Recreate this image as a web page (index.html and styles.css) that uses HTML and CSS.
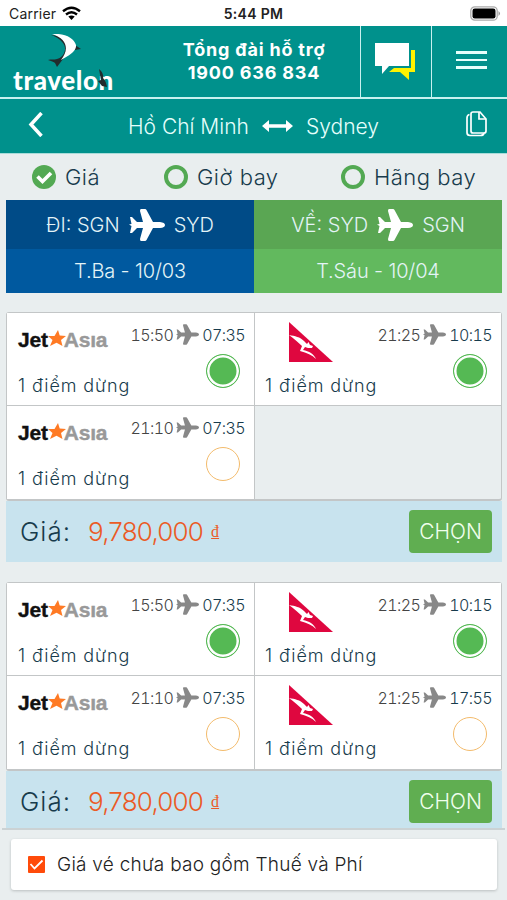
FILE: index.html
```html
<!DOCTYPE html>
<html lang="vi">
<head>
    <meta charset="UTF-8">
    <meta name="viewport" content="width=device-width, initial-scale=1.0">
    <title>Travelon</title>
    <link rel="stylesheet" href="styles.css">
</head>
<body>
    <!-- Shared icons -->
    <svg class="sprite" width="0" height="0">
        <symbol id="plane" viewBox="0 0 36 32">
            <path d="M1 8h2l5 5h6L11 2q0-2 1-2h4q1 0 1.500 1L24 13h7q5 .5 5 3t-5 3h-7l-6.500 12q-.5 1-1.500 1h-4q-1 0-1-2l3-11H8l-5 5H1l1.500-7L0 15.500 2.500 15z"/>
        </symbol>
        <symbol id="star" viewBox="0 0 18 16">
            <path d="M10 0l1.700 5.500L18 6l-5 4 1.500 6L8.500 12.800 2 16l2.500-6L0 6h6.500z"/>
        </symbol>
        <symbol id="qantas" viewBox="0 0 44 40">
            <path fill="#df073f" d="M0 0l44 40H0z"/>
            <path fill="#fff" d="M0 13c6 1 11 2 15 6l3 3 1.500-2 1.500 3 3 1-1 2h-4l-3-1-2 3c6 1 11 4 13 9-4-4-9-6-16-8l2-5c-4-4-8-7-13-11z"/>
        </symbol>
    </svg>

    <div class="status">
        <div class="carrier">
            <span>Carrier</span>
            <svg width="19" height="14" viewBox="0 0 19 14" fill="none" stroke="#000" stroke-width="2.4">
                <path d="M1 5.2Q9.500-1.800 18 5.200M4 8.500q5.500-4.500 11 0"/>
                <path d="M6.300 10.600q3.200-2.400 6.400 0L9.500 14z" fill="#000" stroke="none"/>
            </svg>
        </div>
        <div class="clock">5:44 PM</div>
        <svg class="battery" width="31" height="15" viewBox="0 0 31 15">
            <rect x=".8" y=".8" width="26.400" height="13.400" rx="4" fill="#fff" stroke="#aaa" stroke-width="1.300"/>
            <rect x="2.500" y="2.500" width="23" height="10" rx="2.300"/>
            <path d="M28.500 5q3 2.500 0 5z" fill="#999"/>
        </svg>
    </div>

    <header class="header">
        <div class="logo">
            <svg width="34" height="33" viewBox="0 0 34 33">
                <path fill="#222b2d" d="M3 1c9 3 15 9 14 15-1 5-4 8-8 9-3 1-6 0-9 1 3 1 6 2 7 3l2 4 6-8 5-9V9L10 2zM27 11l6 4-6 1z"/>
                <path fill="#fff" d="M4 0c13-1 22 4 24 11 1 6-8 11-15 15 8-10 7-21-9-26z"/>
            </svg>
            <div class="logo-text">travelon
                <svg class="logo-bird" width="10" height="19" viewBox="0 0 10 19">
                    <path fill="#222b2d" d="M1 0q5 4 4 9 3 3 4 9l-5-1-4-5 3-1z"/>
                </svg>
            </div>
        </div>
        <div class="hotline">Tổng đài hỗ trợ<br>1900 636 834</div>
        <div class="header-btn chat">
            <svg width="41" height="38" viewBox="0 0 41 38">
                <path fill="#fff200" d="M36 7h4v22h-6v8l-9-8H14l5-4h17z"/>
                <path fill="#fff" d="M0 0h34v23H14l-7 8v-8H0z"/>
            </svg>
        </div>
        <div class="header-btn menu"><i></i><i></i><i></i></div>
    </header>

    <div class="route">
        <svg class="back" width="15" height="25" viewBox="0 0 15 25" fill="none" stroke="#fff" stroke-width="3.500">
            <path d="M13.500 1L3 12.500 13.500 24"/>
        </svg>
        <span class="from">Hồ Chí Minh</span>
        <svg class="swap" width="31" height="12" viewBox="0 0 31 12" fill="#fff">
            <path d="M0 6l7-6v4.300h17V0l7 6-7 6V7.700H7V12z"/>
        </svg>
        <span class="to">Sydney</span>
        <svg class="copy" width="21" height="26" viewBox="0 0 21 26" fill="none" stroke="#fff" stroke-width="1.700">
            <path d="M7 1h7l6 7v12q0 2-2 2H7q-2 0-2-2V3q0-2 2-2z"/>
            <path d="M13 1v7h7M3.500 3.500Q1 4 1 7v14.500q0 3 3 3h10.500q3 0 3.500-2.500"/>
        </svg>
    </div>

    <div class="filters">
        <div class="filter">
            <svg width="24" height="24" viewBox="0 0 24 24">
                <circle cx="12" cy="12" r="12" fill="#53a953"/>
                <path d="M5.500 11.500l5 5 8.500-8.500" fill="none" stroke="#fff" stroke-width="3.600"/>
            </svg>
            <span>Giá</span>
        </div>
        <div class="filter"><i class="ring"></i><span>Giờ bay</span></div>
        <div class="filter"><i class="ring"></i><span>Hãng bay</span></div>
    </div>

    <div class="legs">
        <div class="leg depart">
            <div class="leg-route"><span>ĐI: SGN</span><svg><use href="#plane"/></svg><span>SYD</span></div>
            <div class="leg-date">T.Ba - 10/03</div>
        </div>
        <div class="leg return">
            <div class="leg-route"><span>VỀ: SYD</span><svg><use href="#plane"/></svg><span>SGN</span></div>
            <div class="leg-date">T.Sáu - 10/04</div>
        </div>
    </div>

    <div class="offer">
        <div class="flights">
            <div class="flight">
                <div class="jet"><span>Jet</span><svg><use href="#star"/></svg><span class="asia">Asıa</span></div>
                <div class="time"><span>15:50</span><svg><use href="#plane"/></svg><b>07:35</b></div>
                <div class="stops">1 điểm dừng</div>
                <i class="radio on"></i>
            </div>
            <div class="flight">
                <svg class="qantas"><use href="#qantas"/></svg>
                <div class="time"><span>21:25</span><svg><use href="#plane"/></svg><b>10:15</b></div>
                <div class="stops">1 điểm dừng</div>
                <i class="radio on"></i>
            </div>
            <div class="flight">
                <div class="jet"><span>Jet</span><svg><use href="#star"/></svg><span class="asia">Asıa</span></div>
                <div class="time"><span>21:10</span><svg><use href="#plane"/></svg><b>07:35</b></div>
                <div class="stops">1 điểm dừng</div>
                <i class="radio"></i>
            </div>
            <div class="flight empty"></div>
        </div>
        <div class="price">
            <span class="price-label">Giá:</span>
            <span class="amount">9,780,000</span>
            <span class="dong">đ</span>
            <button class="choose">CHỌN</button>
        </div>
    </div>

    <div class="offer">
        <div class="flights">
            <div class="flight">
                <div class="jet"><span>Jet</span><svg><use href="#star"/></svg><span class="asia">Asıa</span></div>
                <div class="time"><span>15:50</span><svg><use href="#plane"/></svg><b>07:35</b></div>
                <div class="stops">1 điểm dừng</div>
                <i class="radio on"></i>
            </div>
            <div class="flight">
                <svg class="qantas"><use href="#qantas"/></svg>
                <div class="time"><span>21:25</span><svg><use href="#plane"/></svg><b>10:15</b></div>
                <div class="stops">1 điểm dừng</div>
                <i class="radio on"></i>
            </div>
            <div class="flight">
                <div class="jet"><span>Jet</span><svg><use href="#star"/></svg><span class="asia">Asıa</span></div>
                <div class="time"><span>21:10</span><svg><use href="#plane"/></svg><b>07:35</b></div>
                <div class="stops">1 điểm dừng</div>
                <i class="radio"></i>
            </div>
            <div class="flight">
                <svg class="qantas"><use href="#qantas"/></svg>
                <div class="time"><span>21:25</span><svg><use href="#plane"/></svg><b>17:55</b></div>
                <div class="stops">1 điểm dừng</div>
                <i class="radio"></i>
            </div>
        </div>
        <div class="price last">
            <span class="price-label">Giá:</span>
            <span class="amount">9,780,000</span>
            <span class="dong">đ</span>
            <button class="choose">CHỌN</button>
        </div>
    </div>

    <footer class="footer">
        <label class="tax">
            <svg width="17" height="17" viewBox="0 0 17 17">
                <rect width="17" height="17" rx="1" fill="#ff4b0a"/>
                <path d="M2.500 8l4 4.500 8-8" fill="none" stroke="#fff" stroke-width="1.800"/>
            </svg>
            <span>Giá vé chưa bao gồm Thuế và Phí</span>
        </label>
    </footer>
</body>
</html>
```

FILE: styles.css
```css
* {
    box-sizing: border-box;
}
body {
    margin: 0;
    width: 507px;
    height: 900px;
    overflow: hidden;
    background: #e9eeef;
    color: #173b4c;
    font-family: Inter, "Noto Sans", sans-serif;
    font-weight: 300;
}
svg {
    display: block;
    flex: none;
}
.sprite {
    position: absolute;
}
.status {
    height: 26px;
    padding: 0 6px 0 9px;
    background: #fff;
    color: #222;
    display: grid;
    grid-template-columns: 1fr auto 1fr;
    align-items: center;
    font-size: 14px;
    font-weight: 400;
}
.carrier {
    display: flex;
    align-items: center;
    gap: 6px;
    letter-spacing: 0.2px;
}
.clock {
    margin-left: -3px;
    font-weight: 600;
    letter-spacing: 0.3px;
}
.battery {
    justify-self: end;
}

/* Header */
.header {
    height: 73px;
    display: flex;
    background: #00918c;
    border-bottom: 2px solid #c8f1ef;
    color: #fff;
}
.logo {
    width: 148px;
    padding: 8px 0 0 13px;
}
.logo > svg {
    margin-left: 35px;
}
.logo-text {
    position: relative;
    margin-top: -2px;
    font: 900 26px/30px Lato, sans-serif;
    letter-spacing: 0.6px;
    white-space: nowrap;
}
.logo-bird {
    position: absolute;
    left: 85px;
    top: 4px;
}
.hotline {
    width: 212px;
    padding-top: 12px;
    text-align: center;
    font-size: 18px;
    line-height: 23px;
    font-weight: 700;
    letter-spacing: 0.8px;
}
.header-btn {
    width: 71px;
    border-left: 1px solid #c8f1ef;
    display: flex;
    justify-content: center;
}
.chat {
    padding: 17px 2px 0 0;
}
.menu {
    width: 76px;
    flex-direction: column;
    justify-content: flex-start;
    gap: 5px;
    padding: 25px 0 0 24px;
}
.menu i {
    width: 31px;
    height: 2.5px;
    background: #e6fffc;
}

/* Route bar */
.route {
    height: 55px;
    display: flex;
    align-items: center;
    padding: 0 20px 0 28px;
    background: #00918c;
    border-bottom: 1px solid #a9dcd9;
    color: #e6fffc;
    font-size: 21px;
}
.back {
    margin-top: -4px;
}
.from {
    width: 121px;
    margin-left: 85px;
    white-space: nowrap;
}
.swap {
    margin-left: 13px;
}
.to {
    margin-left: 13px;
}
.copy {
    margin-left: auto;
    margin-top: -4px;
}

/* Sort options */
.filters {
    height: 46px;
    padding-left: 32px;
    display: grid;
    grid-template-columns: 132px 177px auto;
    align-items: center;
    font-size: 22px;
    letter-spacing: 0.5px;
}
.filter {
    display: flex;
    align-items: center;
    gap: 9px;
    white-space: nowrap;
}
.ring {
    width: 24px;
    height: 24px;
    border: 4px solid #53a953;
    border-radius: 50%;
}

/* Flight legs */
.legs {
    display: flex;
    margin: 0 5px 0 6px;
    color: #e4f4f7;
    font-size: 20px;
}
.leg {
    width: 248px;
}
.leg-route {
    height: 49px;
    display: flex;
    align-items: center;
    justify-content: center;
    gap: 9px;
}
.leg-route svg {
    width: 36px;
    height: 32px;
    fill: #fff;
}
.leg-date {
    height: 44px;
    line-height: 44px;
    text-align: center;
    letter-spacing: -0.15px;
}
.depart {
    background: #00599f;
}
.depart .leg-route {
    background: #004b87;
}
.return {
    background: #62b95e;
}
.return .leg-route {
    background: #5aa653;
}

/* Offers */
.offer {
    margin: 19px 5px 0 6px;
}
.offer + .offer {
    margin-top: 20px;
}
.flights {
    display: grid;
    grid-template-columns: 248px 1fr;
    grid-template-rows: 93px 93px;
    border: 1px solid #c3c6c7;
    border-bottom: 2px solid #c3c6c7;
    border-radius: 3px;
}
.flight {
    display: grid;
    grid-template-columns: 108px 1fr;
    grid-template-rows: 39px 53px;
    padding: 0 9px 0 11px;
    background: #fff;
}
.flight:nth-child(odd) {
    border-right: 1px solid #c3c6c7;
}
.flight:nth-child(-n+2) {
    border-bottom: 1px solid #c3c6c7;
}
.flight:nth-child(even) {
    padding-left: 10px;
}
.empty {
    background: none;
}
.jet {
    display: flex;
    margin-top: 15px;
    color: #111;
    font: bold 21px/24px "Liberation Sans", sans-serif;
    letter-spacing: -0.2px;
    -webkit-text-stroke: 0.4px;
}
.jet svg {
    width: 18px;
    height: 16px;
    margin: 2px -2px 0 0;
    fill: #ff7a24;
}
.asia {
    color: #999;
}
.qantas {
    width: 44px;
    height: 40px;
    margin: 9px 0 0 24px;
}
.time {
    display: flex;
    align-items: center;
    justify-content: flex-end;
    height: 43px;
    gap: 3px;
    color: #444;
    font-size: 16px;
    font-variant-numeric: tabular-nums;
    letter-spacing: -0.6px;
}
.time b {
    min-width: 40px;
    text-align: right;
    font-weight: 300;
    color: #173b4c;
}
.time svg {
    width: 23px;
    height: 21px;
    fill: #888;
}
.stops {
    padding-top: 21px;
    font-size: 18px;
    line-height: 26px;
    letter-spacing: 0.9px;
    white-space: nowrap;
}
.radio {
    justify-self: end;
    width: 34px;
    height: 34px;
    margin: 2px 5px 0 0;
    border: 1.5px solid #f3bb6c;
    border-radius: 50%;
}
.radio.on {
    border-color: #55b954;
    background: #55b954;
    box-shadow: inset 0 0 0 2.5px #fff;
}
.price {
    height: 61px;
    display: flex;
    align-items: center;
    padding: 0 10px 0 14px;
    background: #c8e3ee;
    font-size: 26px;
}
.price-label {
    width: 68px;
    letter-spacing: 1px;
}
.amount {
    color: #eb5b26;
    letter-spacing: -0.8px;
}
.dong {
    margin-left: 8px;
    color: #eb5b26;
    font: 16px "Liberation Serif", serif;
    text-decoration: underline;
}
.choose {
    width: 83px;
    height: 43px;
    margin-left: auto;
    padding: 0;
    border: none;
    border-radius: 4px;
    background: #60ae51;
    color: #f0ffee;
    font: inherit;
    font-size: 21px;
}
.last {
    height: 57px;
    padding-top: 4px;
}

/* Tax note */
.footer {
    height: 73px;
    margin: 0 2px;
    padding: 9px 8px 0 9px;
    border-top: 2px solid #cbd2d4;
}
.tax {
    height: 51px;
    display: flex;
    align-items: center;
    gap: 12px;
    padding-left: 17px;
    border-radius: 3px;
    background: #fff;
    box-shadow: 0 1px 3px rgba(0, 0, 0, 0.2);
    color: #222;
    font-size: 19px;
    letter-spacing: 0.25px;
}
```
